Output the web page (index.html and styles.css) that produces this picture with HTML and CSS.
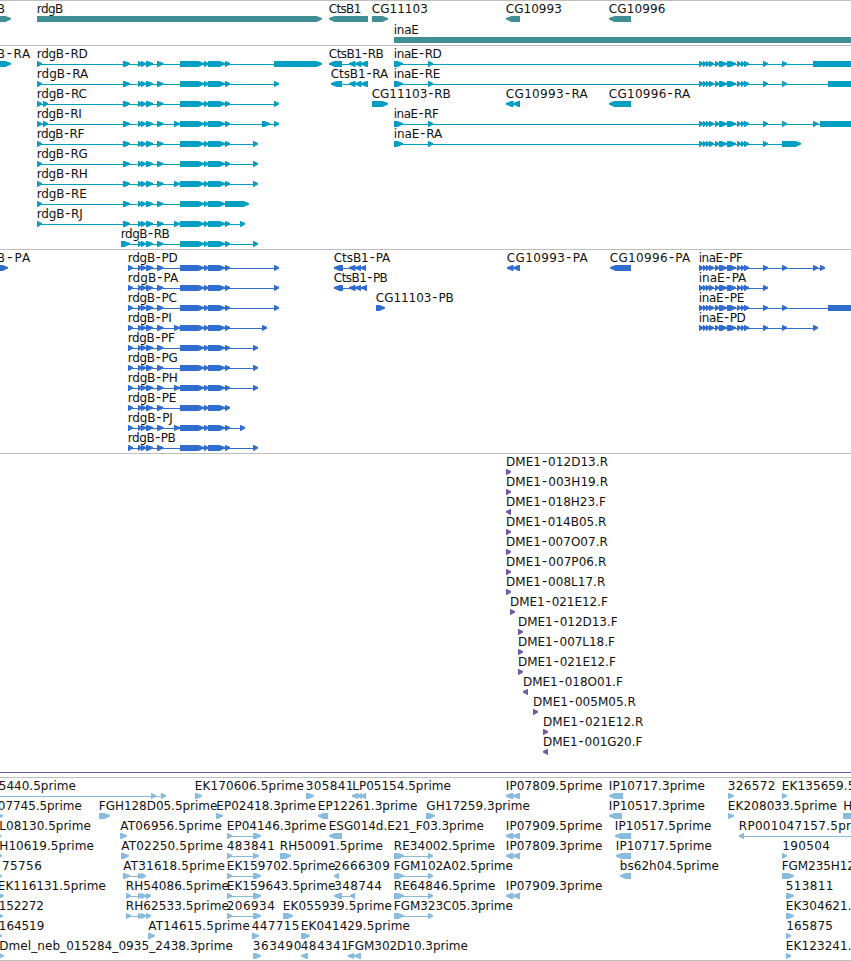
FILE: index.html
```html
<!DOCTYPE html>
<html lang="en">
<head>
<meta charset="utf-8">
<title>Genome tracks</title>
<link rel="stylesheet" href="styles.css">
</head>
<body>
<main class="browser">
<section class="track track-gene"><svg id="genes" width="851" height="44" viewBox="0 1 851 44"></svg></section>
<section class="track track-transcript"><svg id="transcripts" width="851" height="203" viewBox="0 1 851 203"></svg></section>
<section class="track track-protein"><svg id="proteins" width="851" height="203" viewBox="0 1 851 203"></svg></section>
<section class="track track-probe"><svg id="probes" width="851" height="323" viewBox="0 1 851 323"><rect class="extent" x="0" y="319" width="851" height="1"/></svg></section>
<section class="track track-est"><svg id="ests" width="851" height="182" viewBox="0 1 851 182"></svg></section>
</main>
<script src="tracks.js"></script>
</body>
</html>
```
FILE: styles.css
```css
body {
  margin: 0;
  background: #fff;
}

.browser {
  display: flex;
  flex-direction: column;
  width: 851px;
  overflow: hidden;
  border-bottom: 1px solid #bebebe;
}

.track {
  border-top: 1px solid #bebebe;
}

.track svg {
  display: block;
  overflow: hidden;
}

.track text {
  font-family: "DejaVu Sans", sans-serif;
  font-size: 12px;
  fill: #111;
}

.track .dash {
  font-size: 14px;
}

.track-gene { fill: #408f94; }
.track-transcript { fill: #009ec0; }
.track-protein { fill: #316dce; }
.track-probe { fill: #7559a9; }
.track-est { fill: #88bbdd; }
```
FILE: tracks.js
```js
const NS = "http://www.w3.org/2000/svg";

function add(parent, name, attrs, text) {
  const el = document.createElementNS(NS, name);
  for (const key in attrs) el.setAttribute(key, attrs[key]);
  if (text) el.textContent = text;
  parent.appendChild(el);
  return el;
}

// Adds a label and spaces its letters so that it ends at the given x.
function addLabel(svg, label, from, to, y) {
  const text = add(svg, "text", { x: from - 0.7, y });
  const dashes = label.split("-").length - 1;
  let afterDash = false;
  label.split(/(-)/).forEach(part => {
    if (!part) return;
    const dash = part === "-";
    const attrs = dash ? { class: "dash", dx: 1 } : afterDash ? { dx: 1 } : {};
    add(text, "tspan", attrs, part);
    afterDash = dash;
  });
  const natural = [...text.childNodes].reduce((sum, part) => sum + part.getComputedTextLength(), 0);
  const spacing = (to - from + 1 - natural - 2 * dashes) / (label.length - 1 || 1);
  text.style.letterSpacing = spacing.toFixed(3) + "px";
}

// Each row: [label, label start, label end, "start-end ..." blocks, reverse strand?]
function draw(id, rows, pitch) {
  const svg = document.getElementById(id);
  rows.forEach((features, i) => {
    const top = 16 + i * pitch;
    features.forEach(([label, from, to, blocks, reverse]) => {
      const spans = blocks.split(" ").map(s => s.split(":").map(Number));
      const first = spans[0][0];
      const last = spans[spans.length - 1][1];
      if (spans.length > 1) {
        add(svg, "rect", { x: first, y: top + 3, width: last - first - (reverse ? 0 : 2), height: 1 });
      }
      spans.forEach(([a, b]) => {
        const head = Math.min(b - a - 0.5, 5.5);
        const points = reverse
          ? [[b, 0], [a + head, 0], [a, 2], [a, 3.6], [a + head, 6], [b, 6]]
          : [[a, 0], [b - head, 0], [b, 2], [b, 3.6], [b - head, 6], [a, 6]];
        add(svg, "polygon", { points: points.map(([x, y]) => x + "," + (top + y)).join(" ") });
      });
      addLabel(svg, label, from, to, top - 3);
    });
  });
}

draw("genes", [
  [["B", -2.5, 4, "-20:11"], ["rdgB", 37.5, 63, "37:322"], ["CtsB1", 329.5, 361, "329:368", 1],
   ["CG11103", 372.5, 427.5, "372:388"], ["CG10993", 506.5, 561.5, "506:520", 1],
   ["CG10996", 609.5, 665, "609:631", 1]],
  [["inaE", 394.5, 418.5, "394:870"]]
], 21);

const mid = "138:142 141:146 146:153 157:163.5";
const late = "180:204 204:208.5 208:225 225:230";
const rdg = (start, extra, end) => `${start} ${mid} ${extra ? "174:180 " : ""}${late}${end ? " " + end : ""}`;
const ina = "699:703.5 703:706.5 706:709.5 709:714 715:719 719:727 727:736 737:741 741:744.5 744:749 763:768";

draw("transcripts", [
  [["B-RA", -2.5, 30, "-20:11"], ["rdgB-RD", 37.5, 87.5, rdg("37:42 123:130", 0, "274:322")],
   ["CtsB1-RB", 329.5, 383.5, "329:342 349:355.5 355:361.5 361:368", 1],
   ["inaE-RD", 394.5, 441.5, "394:403 428:433 " + ina + " 782:787 813:870"]],
  [["rdgB-RA", 37.5, 88, rdg("37:42 123:130", 0, "274:279")],
   ["CtsB1-RA", 331.5, 388, "331:342 349:355.5 355:361.5 361:368", 1],
   ["inaE-RE", 394.5, 440, "394:403 428:433 " + ina + " 782:787 828:870"]],
  [["rdgB-RC", 37.5, 86.5, rdg("37:42 43:48 123:130", 0, "274:279")],
   ["CG11103-RB", 372.5, 450.5, "372:388"], ["CG10993-RA", 506.5, 587.5, "506:513.5 513:520", 1],
   ["CG10996-RA", 609.5, 690, "609:631", 1]],
  [["rdgB-RI", 37.5, 81.5, rdg("37:42 43:48 123:130", 1, "262:270 274:279")],
   ["inaE-RF", 394.5, 438.5, "394:403 428:433 " + ina + " 782:787 813:818 820:870"]],
  [["rdgB-RF", 37.5, 84, rdg("37:42 123:130", 0, "253:258")],
   ["inaE-RA", 394.5, 442, "394:403 428:433 " + ina + " 782:801"]],
  [["rdgB-RG", 37.5, 87.5, rdg("37:42 123:130", 0, "253:258")]],
  [["rdgB-RH", 37.5, 87.5, rdg("37:42 123:130", 1, "253:258")]],
  [["rdgB-RE", 37.5, 86.5, rdg("37:42 123:130", 0, "225:249")]],
  [["rdgB-RJ", 37.5, 82.5, rdg("37:42 123:130", 1, "240:245")]],
  [["rdgB-RB", 121.5, 169.5, rdg("121:130", 0, "253:258")]]
], 20);

draw("proteins", [
  [["B-PA", -2.5, 30, "-20:8"], ["rdgB-PD", 128.5, 177.5, rdg("128:133", 0, "274:279")],
   ["CtsB1-PA", 334.5, 390, "334:343 349:355.5 355:361 361:366", 1],
   ["CG10993-PA", 507.5, 587.5, "507:513.5 513:520", 1], ["CG10996-PA", 610.5, 690, "610:631", 1],
   ["inaE-PF", 699.5, 742.5, ina + " 782:787 813:818 820:825"]],
  [["rdgB-PA", 128.5, 178, rdg("128:133", 0, "274:279")],
   ["CtsB1-PB", 334.5, 387.5, "334:343 349:355.5 355:361 361:367", 1],
   ["inaE-PA", 699.5, 746, ina]],
  [["rdgB-PC", 128.5, 176.5, rdg("128:133", 0, "274:279")], ["CG11103-PB", 376.5, 453.5, "376:385"],
   ["inaE-PE", 699.5, 744, ina + " 782:787 828:870"]],
  [["rdgB-PI", 128.5, 171.5, rdg("128:133", 1, "262:267")],
   ["inaE-PD", 699.5, 745.5, ina + " 782:787 813:818"]],
  [["rdgB-PF", 128.5, 174.5, rdg("128:133", 0, "253:258")]],
  [["rdgB-PG", 128.5, 177.5, rdg("128:133", 0, "253:258")]],
  [["rdgB-PH", 128.5, 177.5, rdg("128:133", 1, "253:258")]],
  [["rdgB-PE", 128.5, 176, rdg("128:133", 0, "")]],
  [["rdgB-PJ", 128.5, 172.5, rdg("128:133", 1, "240:245")]],
  [["rdgB-PB", 128.5, 175.5, rdg("128:133", 0, "253:258")]]
], 20);

draw("probes", [
  ["012D13.R", 506, 607.7], ["003H19.R", 506, 607.7], ["018H23.F", 506, 605.5, 1],
  ["014B05.R", 506, 606], ["007O07.R", 506, 607.5], ["007P06.R", 506, 606],
  ["008L17.R", 506, 605], ["021E12.F", 510, 607.5], ["012D13.F", 518, 617.3],
  ["007L18.F", 518, 614.5], ["021E12.F", 518, 615.5], ["018O01.F", 523, 622.5, 1],
  ["005M05.R", 533, 635.5], ["021E12.R", 543, 643], ["001G20.F", 543, 642, 1]
].map(([name, x, end, rev]) => [["DME1-" + name, x + 0.7, end, `${x}:${x + 5}`, rev]]), 20);

const ip = "506:513.5 513:520";
const re = "394:404 428:433";
const ep = "227:232 253:261";
const rh = "126:131 138:142.5 141:146 146:151";

draw("ests", [
  [["5440.5prime", -0.5, 75.5, "-20:-15 151:156 161:166"], ["EK170606.5prime", 195.5, 303.5, "195:202"],
   ["305841", 306.5, 353, "306:314"], ["LP05154.5prime", 353, 450.5, "352:358 357:362 361:366", 1],
   ["IP07809.5prime", 506.5, 602, ip, 1], ["IP10717.3prime", 609.5, 704.5, "609:623", 1],
   ["326572", 728.5, 775, "728:734"], ["EK135659.5prime", 782.5, 890.5, "782:787"]],
  [["07745.5prime", -1.5, 81.5, "-9:3"], ["FGH128D05.5prime", 99.5, 217, "99:110"],
   ["EP02418.3prime", 217, 315.5, "216:223"], ["EP12261.3prime", 318.5, 417, "318:328", 1],
   ["GH17259.3prime", 427, 529.5, "426:435"], ["IP10517.3prime", 609.5, 704.5, "609:622", 1],
   ["EK208033.5prime", 728.5, 836.5, "728:734"], ["H", 844, 851, "843:856"]],
  [["L08130.5prime", 0, 90.5, "-9:1.5"], ["AT06956.5prime", 121, 221.5, "120:127"],
   ["EP04146.3prime", 227.5, 326, ep], ["ESG014d.E21_F03.3prime", 329.5, 483.5, "329:342", 1],
   ["IP07909.5prime", 506.5, 602, ip, 1], ["IP10517.5prime", 615.5, 711, "615:631", 1],
   ["RP001047157.5prime", 739.5, 874, "739:744 880:890", 1]],
  [["H10619.5prime", 0, 93.5, "-9:2"], ["AT02250.5prime", 122, 222.5, "121:129"],
   ["483841", 227.5, 274.5, "227:232 253:259"], ["RH50091.5prime", 280.5, 382.5, "280:291"],
   ["RE34002.5prime", 394.5, 494.5, re], ["IP07809.3prime", 506.5, 602, ip, 1],
   ["IP10717.5prime", 616.5, 711.5, "616:631", 1], ["190504", 783, 829.5, "782:787"]],
  [["75756", 2.7, 41.5, "-9:2"], ["AT31618.5prime", 124, 224.5, "123:130 138:142.5 141:146"],
   ["EK159702.5prime", 227.5, 335, ep], ["2666309", 334.5, 389.5, "334:339", 1],
   ["FGM102A02.5prime", 394.5, 512.5, re], ["bs62h04.5prime", 620.5, 718.5, "620:631", 1],
   ["FGM235H12.5prime", 782.5, 900.5, "782:794"]],
  [["EK116131.5prime", -1.5, 105.5, "-9:4"], ["RH54086.5prime", 126.5, 228.5, rh],
   ["EK159643.5prime", 227.5, 335, ep], ["348744", 335, 381.5, "334:342 350:355", 1],
   ["RE64846.5prime", 394.5, 495, re], ["IP07909.3prime", 506.5, 602, ip, 1],
   ["513811", 786.5, 833, "786:794"]],
  [["152272", -0.5, 43.5, "-9:3"], ["RH62533.5prime", 126.5, 228.5, rh],
   ["206934", 227.5, 274.5, ep], ["EK055939.5prime", 283.5, 391.5, "283:293"],
   ["FGM323C05.3prime", 394.5, 512.5, re], ["EK304621.5prime", 786.5, 894.5, "786:794"]],
  [["164519", -0.5, 44, "-9:2"], ["AT14615.5prime", 149, 249.5, "148:155"],
   ["447715", 252.5, 299, "252:259"], ["EK041429.5prime", 301.5, 409.5, "301:310"],
   ["165875", 787, 832.5, "786:791"]],
  [["Dmel_neb_015284_0935_2438.3prime", 0, 232.5, "-9:4"], ["363490", 253.5, 301, "253:261"],
   ["484341", 301.5, 348.5, "301:308", 1], ["FGM302D10.3prime", 348.5, 467.5, "348:354 354:361", 1],
   ["EK123241.5prime", 786.5, 894.5, "786:791"]]
], 20);
```
